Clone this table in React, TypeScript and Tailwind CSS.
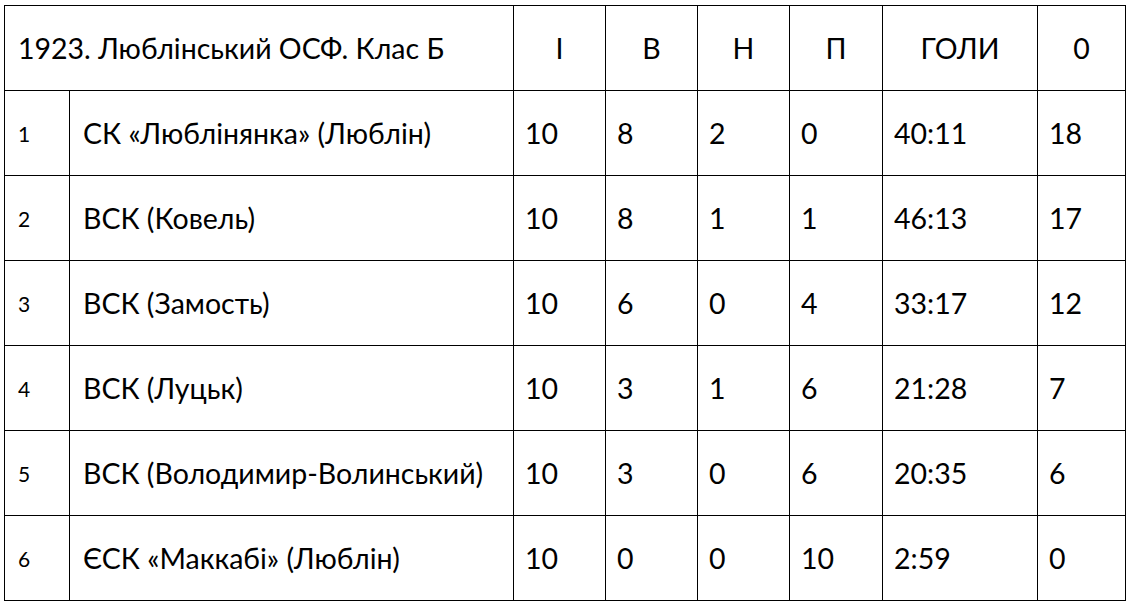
const rows = [
  { n: '1', team: 'СК «Люблінянка» (Люблін)', g: '10', w: '8', d: '2', l: '0', goals: '40:11', pts: '18' },
  { n: '2', team: 'ВСК (Ковель)', g: '10', w: '8', d: '1', l: '1', goals: '46:13', pts: '17' },
  { n: '3', team: 'ВСК (Замость)', g: '10', w: '6', d: '0', l: '4', goals: '33:17', pts: '12' },
  { n: '4', team: 'ВСК (Луцьк)', g: '10', w: '3', d: '1', l: '6', goals: '21:28', pts: '7' },
  { n: '5', team: 'ВСК (Володимир-Волинський)', g: '10', w: '3', d: '0', l: '6', goals: '20:35', pts: '6' },
  { n: '6', team: 'ЄСК «Маккабі» (Люблін)', g: '10', w: '0', d: '0', l: '10', goals: '2:59', pts: '0' },
];

const headers = ['І', 'В', 'Н', 'П', 'ГОЛИ', '0'];

export default function App() {
  const cell = 'border border-black align-middle';

  return (
    <div
      className="min-h-screen bg-white text-black pl-[4px] pt-[5px]"
      style={{ fontFamily: 'Lato, "Open Sans", "Noto Sans", sans-serif' }}
    >
      <table className="table-fixed border-collapse w-[1121px] text-[28.5px] leading-none">
        <colgroup>
          <col className="w-[65px]" />
          <col className="w-[444px]" />
          <col className="w-[92px]" />
          <col className="w-[92px]" />
          <col className="w-[92px]" />
          <col className="w-[93px]" />
          <col className="w-[155px]" />
          <col className="w-[88px]" />
        </colgroup>
        <thead>
          <tr className="h-[85px]">
            <th colSpan={2} className={`${cell} text-left font-normal pl-[13px]`}>
              1923. Люблінський ОСФ. Клас Б
            </th>
            {headers.map((h) => (
              <th key={h} className={`${cell} text-center font-normal`}>
                {h}
              </th>
            ))}
          </tr>
        </thead>
        <tbody>
          {rows.map((r) => (
            <tr key={r.n} className="h-[85px]">
              <td className={`${cell} pl-[13px] text-[21px]`}>{r.n}</td>
              <td className={`${cell} pl-[13px]`}>{r.team}</td>
              <td className={`${cell} pl-[11px]`}>{r.g}</td>
              <td className={`${cell} pl-[11px]`}>{r.w}</td>
              <td className={`${cell} pl-[11px]`}>{r.d}</td>
              <td className={`${cell} pl-[11px]`}>{r.l}</td>
              <td className={`${cell} pl-[11px]`}>{r.goals}</td>
              <td className={`${cell} pl-[11px]`}>{r.pts}</td>
            </tr>
          ))}
        </tbody>
      </table>
    </div>
  );
}
